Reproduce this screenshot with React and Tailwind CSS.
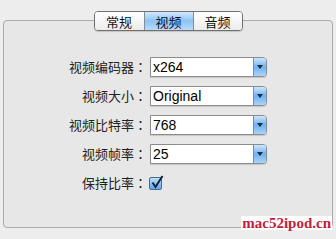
import React from "react";

const cjk = { fontFamily: '"Noto Sans CJK SC", "Noto Sans", sans-serif' };
const cjkTc = { fontFamily: '"Noto Sans CJK TC", "Noto Sans", sans-serif' };

function PopUp({ value }) {
  return (
    <div className="ml-[3px] w-[117px] h-[20px] flex border border-[#8c8c8c] rounded-r-[4px] bg-white shadow-[0_1px_1px_rgba(0,0,0,0.15)]">
      <div
        className="flex-1 pl-[2px] text-[14px] leading-[18px] text-black"
        style={{ fontFamily: '"Liberation Sans", Arial, sans-serif' }}
      >
        {value}
      </div>
      <div className="w-[13px] h-full rounded-r-[3px] border-l border-[#6f8fb8] bg-gradient-to-b from-[#cfe6fb] via-[#6fb1ef] to-[#a9d4fb] flex items-center justify-center">
        <span className="w-0 h-0 border-l-[3px] border-r-[3px] border-t-[4px] border-l-transparent border-r-transparent border-t-[#1d2a44]" />
      </div>
    </div>
  );
}

function Row({ label, children }) {
  return (
    <div className="flex items-center h-[20px]">
      <div className="w-[143px] text-right text-[13px] text-[#222]" style={cjk}>
        {label}
        <span style={cjkTc}>：</span>
      </div>
      {children}
    </div>
  );
}

function App() {
  const tabs = ["常规", "视频", "音频"];
  return (
    <div className="w-[336px] h-[239px] bg-[#ededed] pt-[20px] px-[3px] relative overflow-hidden">
      <div className="w-[330px] h-[208px] border border-[#ababab] rounded-[4px] bg-[#e7e7e7]">
        <div className="flex justify-center -mt-[10px]">
          <div className="flex h-[20px] border border-[#707070] rounded-[4px] overflow-hidden shadow-[0_1px_1px_rgba(0,0,0,0.15)]">
            {tabs.map((t, i) => (
              <div
                key={t}
                className={
                  "w-[49px] flex items-center justify-center text-[13px] leading-none text-[#111] " +
                  (i === 1
                    ? "bg-gradient-to-b from-[#d3e9fc] via-[#8cc3f3] to-[#b8dcfb]"
                    : "bg-gradient-to-b from-white to-[#ececec]") +
                  (i > 0 ? " border-l border-[#8a8a8a]" : "")
                }
                style={cjk}
              >
                {t}
              </div>
            ))}
          </div>
        </div>
        <div className="mt-[26px] flex flex-col gap-[9px]">
          <Row label="视频编码器">
            <PopUp value="x264" />
          </Row>
          <Row label="视频大小">
            <PopUp value="Original" />
          </Row>
          <Row label="视频比特率">
            <PopUp value="768" />
          </Row>
          <Row label="视频帧率">
            <PopUp value="25" />
          </Row>
          <Row label="保持比率">
            <div className="relative ml-[2px] w-[13px] h-[13px] border border-[#4b6a93] rounded-[2px] bg-gradient-to-b from-[#bfe0fb] to-[#5aa6ec]">
              <svg className="absolute left-[1px] -top-[3px]" width="13" height="14" viewBox="0 0 13 14">
                <path d="M1.5 7.5 L4.5 12 L11.5 1" fill="none" stroke="#14233d" strokeWidth="2" />
              </svg>
            </div>
          </Row>
        </div>
      </div>
      <div
        className="absolute right-[4px] bottom-[9px] bg-white px-[1px] text-[15px] leading-[14px] font-bold text-[#c01f3c]"
        style={{ fontFamily: '"Liberation Serif", "Times New Roman", serif' }}
      >
        mac52ipod.cn
      </div>
    </div>
  );
}

export default App;
